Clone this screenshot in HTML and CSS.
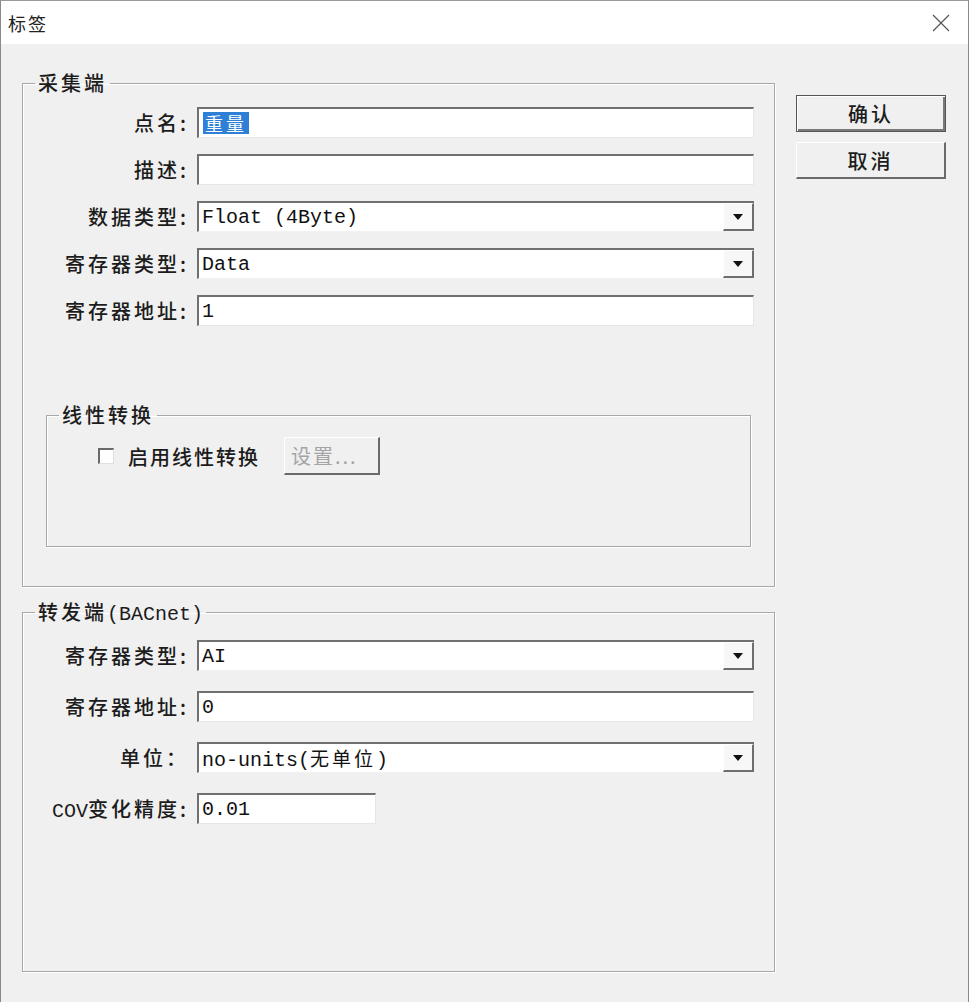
FILE: index.html
```html
<!DOCTYPE html>
<html lang="zh">
<head>
<meta charset="utf-8">
<title>标签</title>
<link rel="stylesheet" href="styles.css">
</head>
<body>
<div class="window">
  <div class="titlebar">
    <span class="title">标签</span>
    <span class="close"><svg width="20" height="20" viewBox="0 0 20 20"><path d="M2 2 L18 18 M18 2 L2 18" stroke="#555" stroke-width="1.2" fill="none"/></svg></span>
  </div>
  <div class="body">
    <div class="main">
      <fieldset class="group g1">
        <legend>采集端</legend>
        <div class="form f1">
          <label class="lbl">点名:</label>
          <div class="field"><span class="sel">重量</span></div>
          <label class="lbl">描述:</label>
          <div class="field"></div>
          <label class="lbl">数据类型:</label>
          <div class="field combo"><span class="val">Float (4Byte)</span><span class="drop"><span class="tri"></span></span></div>
          <label class="lbl">寄存器类型:</label>
          <div class="field combo"><span class="val">Data</span><span class="drop"><span class="tri"></span></span></div>
          <label class="lbl">寄存器地址:</label>
          <div class="field"><span class="val">1</span></div>
        </div>
        <fieldset class="group glin">
          <legend>线性转换</legend>
          <div class="linrow">
            <span class="check"></span>
            <span class="chklabel">启用线性转换</span>
            <span class="btn disabled">设置...</span>
          </div>
        </fieldset>
      </fieldset>
      <fieldset class="group g2">
        <legend>转发端<span class="mono">(BACnet)</span></legend>
        <div class="form f2">
          <label class="lbl">寄存器类型:</label>
          <div class="field combo"><span class="val">AI</span><span class="drop"><span class="tri"></span></span></div>
          <label class="lbl">寄存器地址:</label>
          <div class="field"><span class="val">0</span></div>
          <label class="lbl">单位：</label>
          <div class="field combo"><span class="val">no-units(<span class="cjk">无单位</span>)</span><span class="drop"><span class="tri"></span></span></div>
          <label class="lbl"><span class="mono">COV</span>变化精度:</label>
          <div class="field short"><span class="val">0.01</span></div>
        </div>
      </fieldset>
    </div>
    <div class="actions">
      <span class="btn default">确认</span>
      <span class="btn">取消</span>
    </div>
  </div>
</div>
</body>
</html>
```

FILE: styles.css
```css
* { box-sizing: border-box; }
html, body { margin: 0; padding: 0; }
body {
  width: 969px;
  height: 1002px;
  overflow: hidden;
  background: #f0f0f0;
  font-family: "Noto Sans CJK SC", "Noto Sans", sans-serif;
  color: #1c1c1c;
}
.window {
  width: 969px;
  height: 1002px;
  border-left: 1px solid #8a8a8a;
  border-top: 1px solid #9a9a9a;
  border-right: 1px solid #8a8a8a;
  background: #f0f0f0;
  display: flex;
  flex-direction: column;
}
.titlebar {
  height: 43px;
  background: #ffffff;
  display: flex;
  align-items: center;
  justify-content: space-between;
  padding: 0 17px 0 7px;
  flex: none;
}
.title {
  font-size: 18px;
  letter-spacing: 2px;
  color: #222;
}
.close { display: flex; }
.body {
  flex: 1;
  display: flex;
  align-items: flex-start;
}
.main {
  padding: 27px 0 0 21px;
  display: flex;
  flex-direction: column;
}
.group {
  margin: 0;
  padding: 0;
  min-width: 0;
  border: 1px solid #a8a8a8;
  box-shadow: 1px 1px 0 #ffffff, inset 1px 1px 0 #ffffff;
}
.group legend {
  padding: 0 3px;
  margin-left: 12px;
  font-size: 20px;
  line-height: 24px;
  height: 24px;
  letter-spacing: 3px;
  font-weight: 500;
  color: #1c1c1c;
}
.mono {
  font-family: "Liberation Mono", monospace;
  letter-spacing: 0;
  font-size: 20px;
  line-height: 0;
}
.g1 { width: 753px; height: 516px; }
.g2 { width: 753px; height: 372px; margin-top: 13px; }
.form {
  display: grid;
  grid-template-columns: 166px 557px;
  column-gap: 8px;
  grid-auto-rows: 31px;
}
.f1 { padding-top: 12px; row-gap: 16px; }
.f2 { padding-top: 16px; row-gap: 20px; }
.lbl {
  text-align: right;
  font-size: 20px;
  line-height: 31px;
  height: 31px;
  letter-spacing: 3px;
  font-weight: 500;
  white-space: nowrap;
  color: #1c1c1c;
}
.field {
  position: relative;
  background: #ffffff;
  border-top: 2px solid #707070;
  border-left: 2px solid #707070;
  border-right: 1px solid #e6e6e6;
  border-bottom: 1px solid #e6e6e6;
  display: flex;
  align-items: center;
  padding-left: 3px;
  font-family: "Liberation Mono", "Noto Sans CJK SC", monospace;
  font-size: 20px;
  color: #111;
}
.field.short { width: 179px; }
.val { white-space: pre; }
.cjk { font-family: "Noto Sans CJK SC", sans-serif; font-size: 19px; letter-spacing: 3px; }
.sel {
  background: #2f7fd6;
  color: #ffffff;
  font-family: "Noto Sans CJK SC", sans-serif;
  font-size: 18px;
  line-height: 22px;
  padding: 0 2px;
  letter-spacing: 3px;
  margin-left: 1px;
}
.combo { border-right: none; border-bottom: 1px solid #f2f2f2; }
.drop {
  margin-left: auto;
  align-self: stretch;
  width: 31px;
  background: #f7f7f7;
  border-right: 2px solid #6e6e6e;
  border-bottom: 2px solid #6e6e6e;
  border-top: 1px solid #ffffff;
  border-left: 1px solid #ffffff;
  display: flex;
  align-items: center;
  justify-content: center;
}
.tri {
  width: 0;
  height: 0;
  border-left: 5px solid transparent;
  border-right: 5px solid transparent;
  border-top: 6px solid #111;
}
.glin {
  width: 705px;
  height: 144px;
  margin: 77px 0 0 23px;
}
.glin legend { margin-left: 12px; }
.linrow {
  display: flex;
  align-items: center;
  padding: 10px 0 0 51px;
}
.check {
  width: 16px;
  height: 16px;
  background: #ffffff;
  border-top: 2px solid #6a6a6a;
  border-left: 2px solid #6a6a6a;
  border-right: 1px solid #e0e0e0;
  border-bottom: 1px solid #e0e0e0;
}
.chklabel {
  margin-left: 14px;
  font-size: 20px;
  letter-spacing: 2px;
  font-weight: 500;
  color: #1c1c1c;
}
.btn {
  display: flex;
  align-items: center;
  justify-content: center;
  background: #f0f0f0;
  border-top: 1px solid #ffffff;
  border-left: 1px solid #ffffff;
  border-right: 2px solid #6a6a6a;
  border-bottom: 2px solid #6a6a6a;
  font-size: 20px;
  letter-spacing: 3px;
  font-weight: 500;
  color: #1c1c1c;
}
.btn.disabled {
  width: 96px;
  height: 38px;
  margin-left: 24px;
  color: #a4a4a4;
  font-weight: 400;
  letter-spacing: 2px;
  justify-content: flex-start;
  padding-left: 6px;
}
.actions {
  margin: 51px 0 0 21px;
  display: flex;
  flex-direction: column;
  gap: 10px;
}
.actions .btn { width: 150px; height: 37px; }
.btn.default {
  border: 1px solid #555555;
  box-shadow: inset 1px 1px 0 #ffffff, inset -2px -2px 0 #7a7a7a;
}
```
